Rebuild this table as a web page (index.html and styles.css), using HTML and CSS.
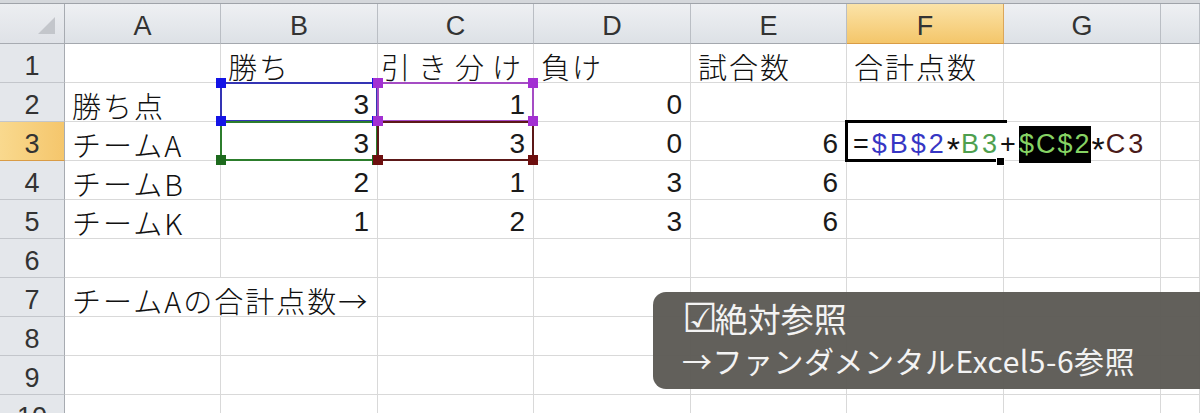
FILE: index.html
```html
<!DOCTYPE html>
<html lang="ja">
<head>
<meta charset="utf-8">
<title>絶対参照</title>
<link rel="stylesheet" href="styles.css">
</head>
<body>
<div class="strip"></div>
<div class="sheet">
  <div class="corner"><span class="tri"></span></div>
  <div class="ch">A</div><div class="ch">B</div><div class="ch">C</div><div class="ch">D</div><div class="ch">E</div><div class="ch sel">F</div><div class="ch">G</div><div class="ch"></div>

  <div class="rh">1</div>
  <div class="c"></div><div class="c">勝ち</div><div class="c wide">引き分け</div><div class="c">負け</div><div class="c">試合数</div><div class="c">合計点数</div><div class="c"></div><div class="c"></div>

  <div class="rh">2</div>
  <div class="c">勝ち点</div>
  <div class="c n rng blue">3<i class="hd tl"></i><i class="hd tr"></i><i class="hd bl"></i><i class="hd br"></i></div>
  <div class="c n rng purple">1<i class="hd tl"></i><i class="hd tr"></i><i class="hd bl"></i><i class="hd br"></i></div>
  <div class="c n">0</div><div class="c"></div><div class="c"></div><div class="c"></div><div class="c"></div>

  <div class="rh sel">3</div>
  <div class="c">チームA</div>
  <div class="c n rng green">3<i class="hd bl"></i><i class="hd br"></i></div>
  <div class="c n rng dred">3<i class="hd bl"></i><i class="hd br"></i></div>
  <div class="c n">0</div><div class="c n">6</div>
  <div class="c act noright"><span class="f">=<b class="fb">$B$2</b><span class="ast">*</span><b class="fg">B3</b>+<b class="fsel">$C$2</b><span class="ast">*</span><b class="fr">C3</b></span><i class="topx"></i><i class="fill"></i></div>
  <div class="c"></div><div class="c"></div>

  <div class="rh">4</div>
  <div class="c">チームB</div><div class="c n">2</div><div class="c n">1</div><div class="c n">3</div><div class="c n">6</div><div class="c"></div><div class="c"></div><div class="c"></div>

  <div class="rh">5</div>
  <div class="c">チームK</div><div class="c n">1</div><div class="c n">2</div><div class="c n">3</div><div class="c n">6</div><div class="c"></div><div class="c"></div><div class="c"></div>

  <div class="rh">6</div>
  <div class="c"></div><div class="c"></div><div class="c"></div><div class="c"></div><div class="c"></div><div class="c"></div><div class="c"></div><div class="c"></div>

  <div class="rh">7</div>
  <div class="c noright">チームAの合計点数→</div><div class="c"></div><div class="c"></div><div class="c"></div><div class="c"></div><div class="c"></div><div class="c"></div><div class="c"></div>

  <div class="rh">8</div>
  <div class="c"></div><div class="c"></div><div class="c"></div><div class="c"></div><div class="c"></div><div class="c"></div><div class="c"></div><div class="c"></div>

  <div class="rh">9</div>
  <div class="c"></div><div class="c"></div><div class="c"></div><div class="c"></div><div class="c"></div><div class="c"></div><div class="c"></div><div class="c"></div>

  <div class="rh">10</div>
  <div class="c"></div><div class="c"></div><div class="c"></div><div class="c"></div><div class="c"></div><div class="c"></div><div class="c"></div><div class="c"></div>
</div>

<div class="note">
  <div class="l1"><span class="chk">☑</span>絶対参照</div>
  <div class="l2">→ファンダメンタルExcel5-6参照</div>
</div>
</body>
</html>
```

FILE: styles.css
```css
html, body {
  margin: 0;
  padding: 0;
  background: #ffffff;
  overflow: hidden;
  width: 1200px;
  height: 413px;
}

body {
  font-family: "Noto Sans CJK JP", "Liberation Sans", sans-serif;
  color: #111111;
}

.strip {
  height: 3px;
  background: #d4d7db;
  border-bottom: 1px solid #9fa3a9;
}

.sheet {
  display: grid;
  grid-template-columns: 65px 156px 157px 156px 157px 156px 157px 157px 39px;
  grid-template-rows: 40px repeat(10, 39px);
  background: #ffffff;
}

.corner {
  background: linear-gradient(#eceef1, #dfe2e7);
  border-right: 1px solid #a7abb1;
  border-bottom: 1px solid #a7abb1;
  display: flex;
  justify-content: flex-end;
  align-items: flex-end;
  padding: 0 9px 9px 0;
  box-sizing: border-box;
}

.tri {
  width: 17px;
  height: 17px;
  background: #c3c6cb;
  clip-path: polygon(100% 0, 100% 100%, 0 100%);
}

.ch {
  background: linear-gradient(#eef0f3, #dde1e6);
  border-right: 1px solid #babec4;
  border-bottom: 1px solid #a4a8ae;
  display: flex;
  justify-content: center;
  align-items: center;
  padding-top: 6px;
  box-sizing: border-box;
  font-family: "Liberation Sans", sans-serif;
  font-size: 27px;
  color: #333333;
}

.ch.sel {
  background: linear-gradient(#fbe3a8, #f4c66a);
  border-right-color: #dba65a;
  border-bottom-color: #d99c45;
}

.rh {
  background: #e4e7eb;
  border-right: 1px solid #a7abb1;
  border-bottom: 1px solid #c3c6cb;
  display: flex;
  justify-content: center;
  align-items: center;
  padding-top: 6px;
  box-sizing: border-box;
  font-family: "Liberation Sans", sans-serif;
  font-size: 27px;
  color: #333333;
}

.rh.sel {
  background: linear-gradient(90deg, #f9d98e, #f5c66c);
  border-bottom-color: #d99c45;
}

.c {
  position: relative;
  border-right: 1px solid #d9d9d9;
  border-bottom: 1px solid #d9d9d9;
  box-sizing: border-box;
  display: flex;
  align-items: center;
  padding: 6px 8px 0 7px;
  font-size: 29px;
  font-weight: 300;
  letter-spacing: 2px;
  white-space: nowrap;
  color: #111111;
  min-width: 0;
}

.c.n {
  justify-content: flex-end;
  font-family: "Liberation Sans", sans-serif;
  font-weight: normal;
  letter-spacing: 0;
  font-size: 28px;
  color: #1a1a1a;
}

.c.wide {
  letter-spacing: 8px;
  padding-left: 3px;
}

.c.noright {
  border-right-color: transparent;
}

/* range highlight boxes */
.rng::before {
  content: "";
  position: absolute;
  left: -1px;
  top: -1px;
  right: -1px;
  bottom: -1px;
  border: 2px solid var(--rc);
  pointer-events: none;
}

.blue { --rc: #3434b4; --hc: #1414e6; }
.purple { --rc: #a54cc4; --hc: #a330d2; }
.green { --rc: #2c7d2c; --hc: #1d6a1d; }
.dred { --rc: #5c1818; --hc: #6e0f0f; }

.hd {
  position: absolute;
  width: 10px;
  height: 10px;
  background: var(--hc);
  z-index: 2;
}
.hd.tl { left: -5px; top: -5px; }
.hd.tr { right: -5px; top: -5px; }
.hd.bl { left: -5px; bottom: -5px; }
.hd.br { right: -5px; bottom: -5px; }

/* active cell with formula */
.act {
  padding-left: 6px;
  overflow: visible;
  z-index: 3;
}

.act::before {
  content: "";
  position: absolute;
  left: -2px;
  top: -2px;
  bottom: -2px;
  right: 6px;
  border-left: 3px solid #000000;
  border-top: 3px solid #000000;
  border-bottom: 3px solid #000000;
}

.topx {
  position: absolute;
  top: -2px;
  right: -4px;
  width: 12px;
  height: 3px;
  background: #000000;
}

.fill {
  position: absolute;
  right: -2px;
  bottom: -6px;
  width: 7px;
  height: 7px;
  background: #000000;
  border: 1px solid #ffffff;
}

.f {
  font-family: "Liberation Sans", sans-serif;
  font-size: 27px;
  letter-spacing: 3px;
  color: #111111;
}

.f b {
  font-weight: normal;
}

.ast {
  display: inline-block;
  font-size: 34px;
  line-height: 20px;
  letter-spacing: 0;
  margin-right: 1px;
  transform: translateY(8px);
}

.fb { color: #3636c4; }
.fg { color: #4e9f4e; }
.fsel {
  color: #86d364;
  background: #000000;
  display: inline-block;
  line-height: 37px;
  letter-spacing: 2px;
}
.fr { color: #4a1a1a; }

/* caption overlay */
.note {
  position: absolute;
  left: 653px;
  top: 292px;
  width: 580px;
  height: 97px;
  box-sizing: border-box;
  background: rgba(92, 89, 84, 0.96);
  border-radius: 13px;
  padding: 5px 0 0 29px;
  color: #f3f3f3;
  font-family: "Noto Sans CJK JP", sans-serif;
}

.note .l1 {
  font-size: 33px;
  line-height: 42px;
}

.note .chk {
  font-family: "DejaVu Sans", sans-serif;
  font-size: 40px;
  line-height: 0;
  margin-right: -3px;
}

.note .l2 {
  font-size: 30px;
  line-height: 42px;
  letter-spacing: 0.5px;
}
```
